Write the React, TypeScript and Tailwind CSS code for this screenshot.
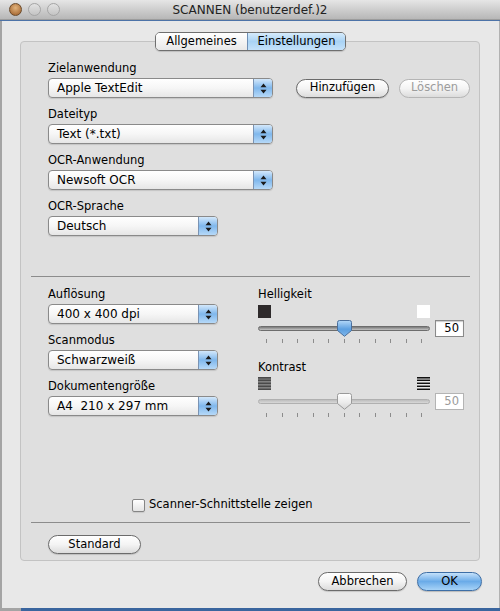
import React from 'react';

function Popup({ label, className }: { label: string; className: string }) {
  return (
    <div className={`relative flex h-[20px] items-center overflow-hidden rounded-[4px] border border-[#8a8a8a] bg-linear-to-b from-white via-[#f6f6f6] to-[#e6e6e6] shadow-[0_1px_1px_rgba(0,0,0,0.12)] ${className}`}>
      <span className="flex-1 pl-[8px] text-[12px] leading-none">{label}</span>
      <div className="flex h-full w-[19px] items-center justify-center border-l border-[#7a93b3] bg-linear-to-b from-[#d3e8fb] via-[#7fb7ec] to-[#b6d9f8]">
        <svg width="7" height="11" viewBox="0 0 7 11">
          <path d="M3.5 0.5 L6.5 4.2 H0.5Z M3.5 10.5 L6.5 6.8 H0.5Z" fill="#1b1b1b" />
        </svg>
      </div>
    </div>
  );
}

function Label({ children }: { children: React.ReactNode }) {
  return <div className="mb-[3px] h-[14px] leading-[14px]">{children}</div>;
}

function Capsule({ children, className, disabled }: { children: React.ReactNode; className: string; disabled?: boolean }) {
  return (
    <button
      className={`flex items-center justify-center rounded-full border bg-linear-to-b from-white via-[#f4f4f4] to-[#dcdcdc] leading-none ${
        disabled ? 'border-[#b5b5b5] text-[#9c9c9c]' : 'border-[#6b6b6b] text-black shadow-[0_1px_1px_rgba(0,0,0,0.15)]'
      } ${className}`}
    >
      {children}
    </button>
  );
}

function Thumb({ blue }: { blue: boolean }) {
  return (
    <svg width="15" height="17" viewBox="0 0 15 17" className="absolute left-[79px] top-[-6px]">
      <defs>
        <linearGradient id={blue ? 'tb' : 'tw'} x1="0" y1="0" x2="0" y2="1">
          <stop offset="0" stopColor={blue ? '#b4d8f8' : '#ffffff'} />
          <stop offset="0.55" stopColor={blue ? '#5c9fe0' : '#ececec'} />
          <stop offset="1" stopColor={blue ? '#7fb6ea' : '#d6d6d6'} />
        </linearGradient>
      </defs>
      <path
        d="M2.5 0.5 H12.5 Q14.5 0.5 14.5 2.5 V10.5 L7.5 16.3 L0.5 10.5 V2.5 Q0.5 0.5 2.5 0.5Z"
        fill={`url(#${blue ? 'tb' : 'tw'})`}
        stroke={blue ? '#4a6f9c' : '#9a9a9a'}
      />
    </svg>
  );
}

function Ticks() {
  return (
    <div className="flex w-[172px] justify-between pl-[8px] pr-[8px]">
      {Array.from({ length: 11 }).map((_, i) => (
        <div key={i} className="h-[4px] w-px bg-[#8c8c8c]" />
      ))}
    </div>
  );
}

function Slider({ enabled }: { enabled: boolean }) {
  return (
    <div className="flex items-center">
      <div className="relative h-[17px] w-[172px]">
        <div
          className={`absolute left-0 right-0 top-[6px] h-[5px] rounded-full border ${
            enabled ? 'border-[#6d6d6d] bg-linear-to-b from-[#7a7a7a] to-[#c4c4c4]' : 'border-[#b0b0b0] bg-linear-to-b from-[#bdbdbd] to-[#d8d8d8]'
          }`}
        />
        <div className="absolute left-0 top-[6px]">
          <Thumb blue={enabled} />
        </div>
      </div>
      <div
        className={`ml-[5px] flex h-[17px] w-[29px] items-center justify-end border bg-white pr-[4px] leading-none ${
          enabled ? 'border-[#8a8a8a] text-black shadow-[inset_0_1px_1px_rgba(0,0,0,0.2)]' : 'border-[#b4b4b4] text-[#9a9a9a]'
        }`}
      >
        50
      </div>
    </div>
  );
}

function Stripes({ dark }: { dark: boolean }) {
  return (
    <svg width="13" height="13" viewBox="0 0 13 13">
      <rect width="13" height="13" fill={dark ? '#ffffff' : '#8a8a8a'} />
      {[0, 3, 6, 9, 12].map((y) => (
        <rect key={y} x="0" y={y - 0.5 < 0 ? 0 : y - 0.5} width="13" height="1.6" fill={dark ? '#111111' : '#4a4a4a'} />
      ))}
    </svg>
  );
}

export default function App() {
  return (
    <div className="relative flex h-[611px] w-[500px] flex-col overflow-hidden bg-[#e8e8e8] font-['DejaVu_Sans',sans-serif] text-[11.5px] text-black">
      {/* title bar */}
      <div className="relative flex h-[20px] items-center border-b border-[#9c9c9c] bg-linear-to-b from-[#e6e6e6] to-[#b7b7b7]">
        <div className="flex items-center gap-[6px] pl-[9px]">
          <div className="h-[13px] w-[13px] rounded-full border border-[#6a4a2a] bg-[radial-gradient(circle_at_50%_35%,#e2b37c,#9a5a25)]" />
          <div className="h-[13px] w-[13px] rounded-full border border-[#a5a5a5] bg-linear-to-b from-[#e2e2e2] to-[#c4c4c4]" />
          <div className="h-[13px] w-[13px] rounded-full border border-[#a5a5a5] bg-linear-to-b from-[#e2e2e2] to-[#c4c4c4]" />
        </div>
        <div className="absolute inset-0 flex items-center justify-center text-[12px] text-[#222]">SCANNEN (benutzerdef.)2</div>
      </div>
      <div className="h-px bg-[#4d73a8]" />

      {/* body */}
      <div className="flex flex-1 flex-col border-l-2 border-r border-l-[#a4a4a4] border-r-[#b2b2b2]">
        <div className="relative z-10 flex justify-center pt-[11px]">
          <div className="flex h-[19px] overflow-hidden rounded-[5px] border border-[#6f6f6f] shadow-[0_1px_1px_rgba(0,0,0,0.15)]">
            <div className="flex w-[91px] items-center justify-center bg-linear-to-b from-white to-[#e8e8e8] leading-none">Allgemeines</div>
            <div className="flex w-[98px] items-center justify-center border-l border-[#6f8fb5] bg-linear-to-b from-[#d6ebfb] via-[#a9d3f5] to-[#c5e2fa] leading-none">Einstellungen</div>
          </div>
        </div>

        <div className="ml-[18px] mt-[-10px] flex h-[520px] w-[460px] flex-col rounded-[4px] border border-[#c3c3c3] bg-[#dfdfdf] pl-[27px] pt-[19px]">
          <Label>Zielanwendung</Label>
          <div className="mb-[9px] flex items-center">
            <Popup label="Apple TextEdit" className="w-[225px]" />
            <Capsule className="ml-[23px] h-[19px] w-[93px]">Hinzufügen</Capsule>
            <Capsule className="ml-[10px] h-[19px] w-[71px]" disabled>
              Löschen
            </Capsule>
          </div>
          <Label>Dateityp</Label>
          <Popup label="Text (*.txt)" className="mb-[9px] w-[225px]" />
          <Label>OCR-Anwendung</Label>
          <Popup label="Newsoft OCR" className="mb-[9px] w-[225px]" />
          <Label>OCR-Sprache</Label>
          <Popup label="Deutsch" className="w-[170px]" />

          <div className="ml-[-17px] mt-[40px] h-px w-[439px] bg-[#8c8c8c]" />

          <div className="mt-[10px] flex">
            <div className="flex w-[170px] flex-col">
              <Label>Auflösung</Label>
              <Popup label="400 x 400 dpi" className="mb-[9px] w-[170px]" />
              <Label>Scanmodus</Label>
              <Popup label="Schwarzweiß" className="mb-[9px] w-[170px]" />
              <Label>Dokumentengröße</Label>
              <Popup label="A4  210 x 297 mm" className="w-[170px] whitespace-pre" />
            </div>
            <div className="ml-[40px] flex flex-col">
              <div className="h-[14px] leading-[14px]">Helligkeit</div>
              <div className="mt-[4px] flex w-[172px] justify-between">
                <div className="h-[13px] w-[13px] bg-[#2e2a2b]" />
                <div className="h-[13px] w-[13px] bg-white" />
              </div>
              <div className="mt-[2px]">
                <Slider enabled />
              </div>
              <div className="mt-[2px]">
                <Ticks />
              </div>
              <div className="mt-[17px] h-[14px] leading-[14px]">Kontrast</div>
              <div className="mt-[3px] flex w-[172px] justify-between">
                <Stripes dark={false} />
                <Stripes dark />
              </div>
              <div className="mt-[3px]">
                <Slider enabled={false} />
              </div>
              <div className="mt-[3px]">
                <Ticks />
              </div>
            </div>
          </div>

          <div className="ml-[84px] mt-[81px] flex h-[14px] items-center">
            <div className="h-[13px] w-[13px] rounded-[2px] border border-[#858585] bg-linear-to-b from-white to-[#e4e4e4] shadow-[0_1px_1px_rgba(0,0,0,0.1)]" />
            <span className="ml-[4px] leading-none">Scanner-Schnittstelle zeigen</span>
          </div>

          <div className="ml-[-17px] mt-[10px] h-px w-[439px] bg-[#8c8c8c]" />

          <Capsule className="mt-[12px] h-[19px] w-[93px]">Standard</Capsule>
        </div>

        <div className="mt-[11px] flex justify-end gap-[10px] pr-[17px]">
          <Capsule className="h-[19px] w-[89px]">Abbrechen</Capsule>
          <button className="flex h-[19px] w-[65px] items-center justify-center rounded-full border border-[#3d6ea6] bg-linear-to-b from-[#c4e1fa] via-[#6aabe8] to-[#a7d3f7] leading-none shadow-[0_1px_1px_rgba(0,0,0,0.2)]">
            OK
          </button>
        </div>
      </div>
      <div className="flex h-[3px]">
        <div className="w-[21px] bg-[#a4a4a4]" />
        <div className="flex-1 bg-[#3a659e]" />
      </div>
    </div>
  );
}
